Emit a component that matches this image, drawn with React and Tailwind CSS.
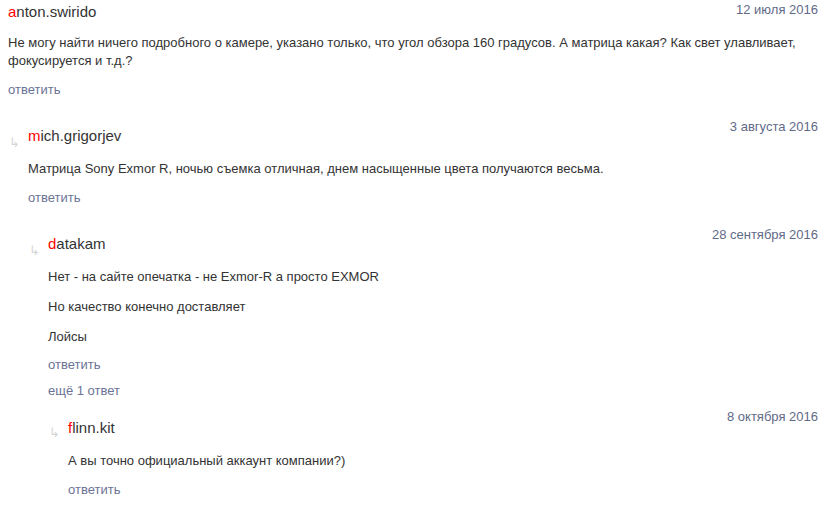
const font = { fontFamily: '"Liberation Sans", Arial, sans-serif' }

const Reply = ({ children = 'ответить', className = '' }) => (
  <a href="#" className={`block text-[13px] leading-[18px] text-[#6b7395] hover:underline ${className}`}>{children}</a>
)

const Name = ({ name }) => (
  <span className="text-[15px] leading-[20px] text-[#333]">
    <span className="text-[#f00]">{name[0]}</span>
    {name.slice(1)}
  </span>
)

const Arrow = () => (
  <span className="absolute left-[1px] top-[20px] text-[13px] leading-[12px] text-[#d6d6d6]">↳</span>
)

const Comment = ({ name, date, lines, nested, namePad = '', textGap, replyGap, children }) => (
  <div className={nested ? 'relative pl-[20px]' : ''}>
    {nested && <Arrow />}
    <div className="flex items-start justify-between">
      <div className={namePad}>
        <Name name={name} />
      </div>
      <span className="text-[13px] leading-[20px] text-[#5f6a88]">{date}</span>
    </div>
    <div className={textGap}>
      {lines.map((l, i) => (
        <p key={i} className={`text-[13px] leading-[18px] text-[#333] ${i > 0 ? 'mt-[12px]' : ''}`}>{l}</p>
      ))}
    </div>
    <Reply className={replyGap} />
    {children}
  </div>
)

export default function App() {
  return (
    <div className="bg-white min-h-[511px] pl-[8px] pr-[16px]" style={font}>
      <Comment
        name="anton.swirido"
        date="12 июля 2016"
        textGap="mt-[10px]"
        replyGap="mt-[11px]"
        lines={[
          'Не могу найти ничего подробного о камере, указано только, что угол обзора 160 градусов. А матрица какая? Как свет улавливает, фокусируется и т.д.?',
        ]}
      >
        <div className="mt-[18px]">
          <Comment
            nested
            name="mich.grigorjev"
            date="3 августа 2016"
            namePad="pt-[7px]"
            textGap="mt-[12px]"
            replyGap="mt-[11px]"
            lines={['Матрица Sony Exmor R, ночью съемка отличная, днем насыщенные цвета получаются весьма.']}
          >
            <div className="mt-[18px]">
              <Comment
                nested
                name="datakam"
                date="28 сентября 2016"
                namePad="pt-[7px]"
                textGap="mt-[12px]"
                replyGap="mt-[10px]"
                lines={['Нет - на сайте опечатка - не Exmor-R а просто EXMOR', 'Но качество конечно доставляет', 'Лойсы']}
              >
                <Reply className="mt-[8px]">ещё 1 ответ</Reply>
                <div className="mt-[7px]">
                  <Comment
                    nested
                    name="flinn.kit"
                    date="8 октября 2016"
                    namePad="pt-[9px]"
                    textGap="mt-[12px]"
                    replyGap="mt-[11px]"
                    lines={['А вы точно официальный аккаунт компании?)']}
                  />
                </div>
              </Comment>
            </div>
          </Comment>
        </div>
      </Comment>
    </div>
  )
}
